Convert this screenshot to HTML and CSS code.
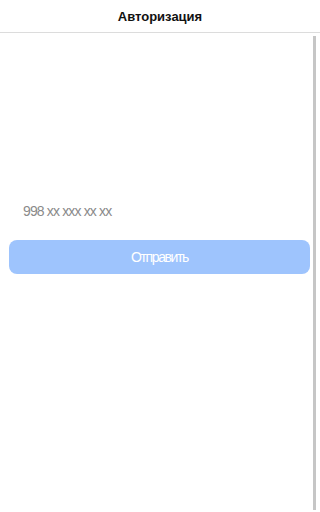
FILE: index.html
```html
<!DOCTYPE html>
<html lang="ru">
<head>
<meta charset="utf-8">
<title>Авторизация</title>
<link rel="stylesheet" href="styles.css">
</head>
<body>
<header class="topbar"><h1 class="title">Авторизация</h1></header>
<div class="page">
  <main class="content">
    <form class="auth-form">
      <input class="phone" type="tel" placeholder="998 xx xxx xx xx">
      <button class="submit" type="button">Отправить</button>
    </form>
  </main>
  <div class="scrollbar"></div>
</div>
</body>
</html>
```
FILE: styles.css
```css
html, body {
  margin: 0;
  padding: 0;
  background: #fff;
  font-family: "Liberation Sans", Arial, sans-serif;
}
.topbar {
  height: 32px;
  border-bottom: 1px solid #dcdcdc;
  display: flex;
  align-items: center;
  justify-content: center;
}
.title {
  margin: 0;
  font-size: 13px;
  font-weight: bold;
  color: #111;
}
.page {
  display: flex;
  height: 479px;
}
.content {
  flex: 1;
}
.scrollbar {
  width: 3px;
  margin: 3px 4px 2px 0;
  background: #c6c6c6;
}
.auth-form {
  display: flex;
  flex-direction: column;
  padding: 163px 3px 0 9px;
  gap: 14px;
}
.phone {
  height: 30px;
  border: none;
  outline: none;
  padding: 0 0 0 14px;
  margin: 0;
  font-family: "Liberation Sans", Arial, sans-serif;
  font-size: 14px;
  letter-spacing: -0.85px;
  color: #333;
  background: transparent;
}
.phone::placeholder {
  color: #8a8a8a;
}
.submit {
  height: 34px;
  border: none;
  border-radius: 8px;
  background: #9ec4fd;
  color: #fff;
  font-family: "Liberation Sans", Arial, sans-serif;
  font-size: 14px;
  letter-spacing: -1.4px;
  padding: 0;
}
```
